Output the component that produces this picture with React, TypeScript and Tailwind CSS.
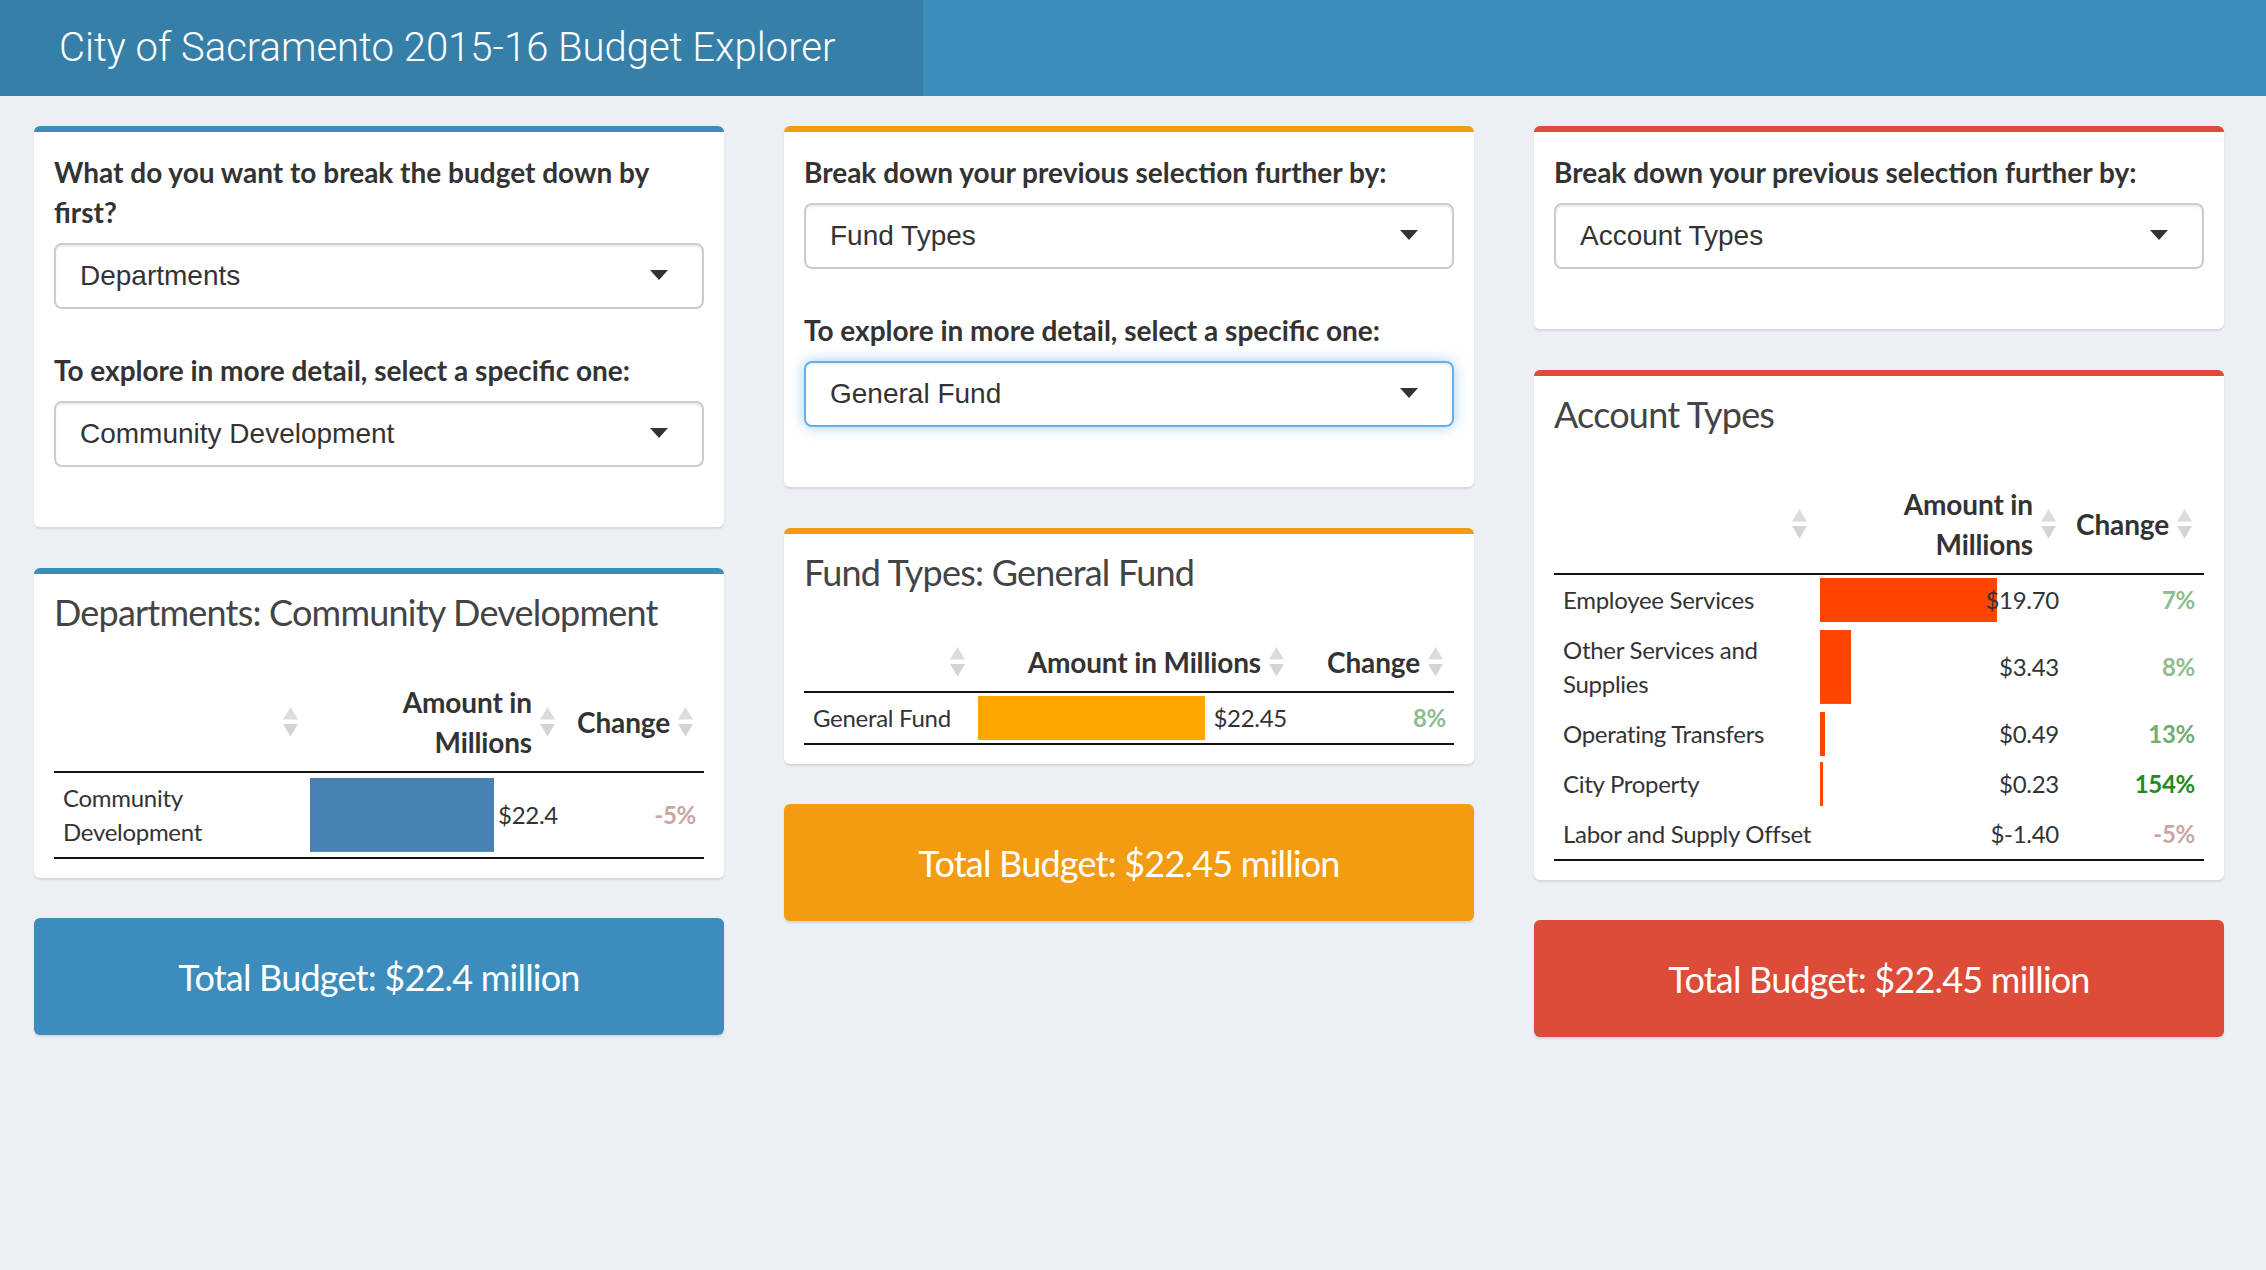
import React from "react";

type Row = {
  name: React.ReactNode;
  amount: string;
  change: string;
  changeColor: string;
  bar: number;
};

function SortIcon() {
  return (
    <svg width="15" height="30" viewBox="0 0 15 30" className="shrink-0">
      <path d="M7.5 0 L15 12.5 L0 12.5 Z" fill="#dcdcdc" />
      <path d="M0 17 L15 17 L7.5 29.5 Z" fill="#d4d4d4" />
    </svg>
  );
}

function Select({ value, focused }: { value: string; focused?: boolean }) {
  return (
    <div
      className={
        "flex h-[66px] items-center justify-between rounded-[8px] border-2 bg-white pl-[24px] pr-[34px] " +
        (focused
          ? "border-[#66afe9] shadow-[inset_0_2px_2px_rgba(0,0,0,0.075),0_0_14px_rgba(102,175,233,0.6)]"
          : "border-[#cccccc] shadow-[inset_0_2px_2px_rgba(0,0,0,0.08)]")
      }
    >
      <span className="font-['Liberation_Sans',Arial,sans-serif] text-[28px] leading-[40px] text-[#333333]">
        {value}
      </span>
      <span className="mb-[3px] h-0 w-0 border-x-[9px] border-t-[10px] border-x-transparent border-t-[#333333]" />
    </div>
  );
}

function Label({ children }: { children: React.ReactNode }) {
  return (
    <div className="mb-[11px] font-['Lato',sans-serif] text-[28px] font-bold leading-[40px] text-[#333333]">
      {children}
    </div>
  );
}

function Box({ border, children }: { border: string; children: React.ReactNode }) {
  return (
    <div className={"rounded-[6px] border-t-[6px] bg-white shadow-[0_2px_2px_rgba(0,0,0,0.1)] " + border}>
      {children}
    </div>
  );
}

function TotalBox({ bg, text }: { bg: string; text: string }) {
  return (
    <div
      className={
        "flex h-[117px] items-center justify-center rounded-[6px] font-['Lato',sans-serif] text-[36px] tracking-[-0.022em] text-white shadow-[0_2px_2px_rgba(0,0,0,0.1)] " +
        bg
      }
    >
      {text}
    </div>
  );
}

function DataTable({
  title,
  cols,
  header,
  rows,
  barColor,
  barOffset,
}: {
  title: string;
  cols: string;
  header: React.ReactNode;
  rows: Row[];
  barColor: string;
  barOffset: number;
}) {
  return (
    <div className="px-[20px] pb-[19px] pt-[20px] font-['Lato',sans-serif]">
      <h3 className="text-[36px] leading-[36px] tracking-[-0.022em] text-[#444444]">{title}</h3>
      <div className="mt-[52px]">
        <div
          className={
            "grid items-center border-b-2 border-[#111111] pb-[9px] text-[28px] font-bold leading-[40px] tracking-[-0.005em] text-[#333333] " +
            cols
          }
        >
          <div className="flex justify-end pr-[11px]">
            <SortIcon />
          </div>
          <div className="flex items-center justify-end gap-[8px] pr-[11px] text-right">
            <span>{header}</span>
            <SortIcon />
          </div>
          <div className="flex items-center justify-end gap-[8px] pr-[11px]">
            <span>Change</span>
            <SortIcon />
          </div>
        </div>
        {rows.map((r, i) => (
          <div key={i} className={"grid text-[24px] leading-[34px] tracking-[-0.012em] text-[#333333] " + cols}>
            <div className="whitespace-nowrap py-[8px] pl-[9px]">{r.name}</div>
            <div
              className="flex items-center justify-end py-[8px] pr-[8px]"
              style={{
                backgroundImage: `linear-gradient(${barColor}, ${barColor})`,
                backgroundSize: `${r.bar}px 88%`,
                backgroundPosition: `${barOffset}px center`,
                backgroundRepeat: "no-repeat",
              }}
            >
              {r.amount}
            </div>
            <div
              className="flex items-center justify-end py-[8px] pr-[8px] font-bold"
              style={{ color: r.changeColor }}
            >
              {r.change}
            </div>
          </div>
        ))}
        <div className="border-t-2 border-[#111111]" />
      </div>
    </div>
  );
}

const NEG = "#cba5a5";
const LIGHTGREEN = "#8fbc8f";

export default function App() {
  return (
    <div className="min-h-[1270px] bg-[#ecf0f5]">
      <header className="flex h-[96px]">
        <div className="flex w-[923px] items-center bg-[#367fa9] pl-[59px] font-['Roboto',sans-serif] text-[40px] font-light text-white">
          City of Sacramento 2015-16 Budget Explorer
        </div>
        <div className="flex-1 bg-[#3c8dbc]" />
      </header>

      <main className="flex items-start gap-[60px] pl-[34px] pt-[30px]">
        {/* Column 1 */}
        <div className="flex w-[690px] flex-col">
          <Box border="border-t-[#3c8dbc]">
            <div className="px-[20px] pb-[60px] pt-[20px]">
              <Label>
                What do you want to break the budget down by
                <br />
                first?
              </Label>
              <Select value="Departments" />
              <div className="mt-[41px]">
                <Label>To explore in more detail, select a specific one:</Label>
                <Select value="Community Development" />
              </div>
            </div>
          </Box>
          <div className="mt-[41px]">
            <Box border="border-t-[#3c8dbc]">
              <DataTable
                title="Departments: Community Development"
                cols="grid-cols-[255px_257px_138px]"
                header={
                  <>
                    Amount in
                    <br />
                    Millions
                  </>
                }
                barColor="#4682b4"
                barOffset={1}
                rows={[
                  {
                    name: (
                      <>
                        Community
                        <br />
                        Development
                      </>
                    ),
                    amount: "$22.4",
                    change: "-5%",
                    changeColor: NEG,
                    bar: 184,
                  },
                ]}
              />
            </Box>
          </div>
          <div className="mt-[40px]">
            <TotalBox bg="bg-[#3c8dbc]" text="Total Budget: $22.4 million" />
          </div>
        </div>

        {/* Column 2 */}
        <div className="flex w-[690px] flex-col">
          <Box border="border-t-[#f39c12]">
            <div className="px-[20px] pb-[60px] pt-[20px]">
              <Label>Break down your previous selection further by:</Label>
              <Select value="Fund Types" />
              <div className="mt-[41px]">
                <Label>To explore in more detail, select a specific one:</Label>
                <Select value="General Fund" focused />
              </div>
            </div>
          </Box>
          <div className="mt-[41px]">
            <Box border="border-t-[#f39c12]">
              <DataTable
                title="Fund Types: General Fund"
                cols="grid-cols-[172px_319px_159px]"
                header="Amount in Millions"
                barColor="#ffa500"
                barOffset={2}
                rows={[
                  {
                    name: "General Fund",
                    amount: "$22.45",
                    change: "8%",
                    changeColor: LIGHTGREEN,
                    bar: 227,
                  },
                ]}
              />
            </Box>
          </div>
          <div className="mt-[40px]">
            <TotalBox bg="bg-[#f39c12]" text="Total Budget: $22.45 million" />
          </div>
        </div>

        {/* Column 3 */}
        <div className="flex w-[690px] flex-col">
          <Box border="border-t-[#dd4b39]">
            <div className="px-[20px] pb-[60px] pt-[20px]">
              <Label>Break down your previous selection further by:</Label>
              <Select value="Account Types" />
            </div>
          </Box>
          <div className="mt-[41px]">
            <Box border="border-t-[#dd4b39]">
              <DataTable
                title="Account Types"
                cols="grid-cols-[264px_249px_136px]"
                header={
                  <>
                    Amount in
                    <br />
                    Millions
                  </>
                }
                barColor="#ff4500"
                barOffset={2}
                rows={[
                  { name: "Employee Services", amount: "$19.70", change: "7%", changeColor: LIGHTGREEN, bar: 177 },
                  {
                    name: (
                      <>
                        Other Services and
                        <br />
                        Supplies
                      </>
                    ),
                    amount: "$3.43",
                    change: "8%",
                    changeColor: LIGHTGREEN,
                    bar: 31,
                  },
                  { name: "Operating Transfers", amount: "$0.49", change: "13%", changeColor: "#6fae6f", bar: 5 },
                  { name: "City Property", amount: "$0.23", change: "154%", changeColor: "#228b22", bar: 3 },
                  { name: "Labor and Supply Offset", amount: "$-1.40", change: "-5%", changeColor: NEG, bar: 0 },
                ]}
              />
            </Box>
          </div>
          <div className="mt-[40px]">
            <TotalBox bg="bg-[#dd4b39]" text="Total Budget: $22.45 million" />
          </div>
        </div>
      </main>
    </div>
  );
}
